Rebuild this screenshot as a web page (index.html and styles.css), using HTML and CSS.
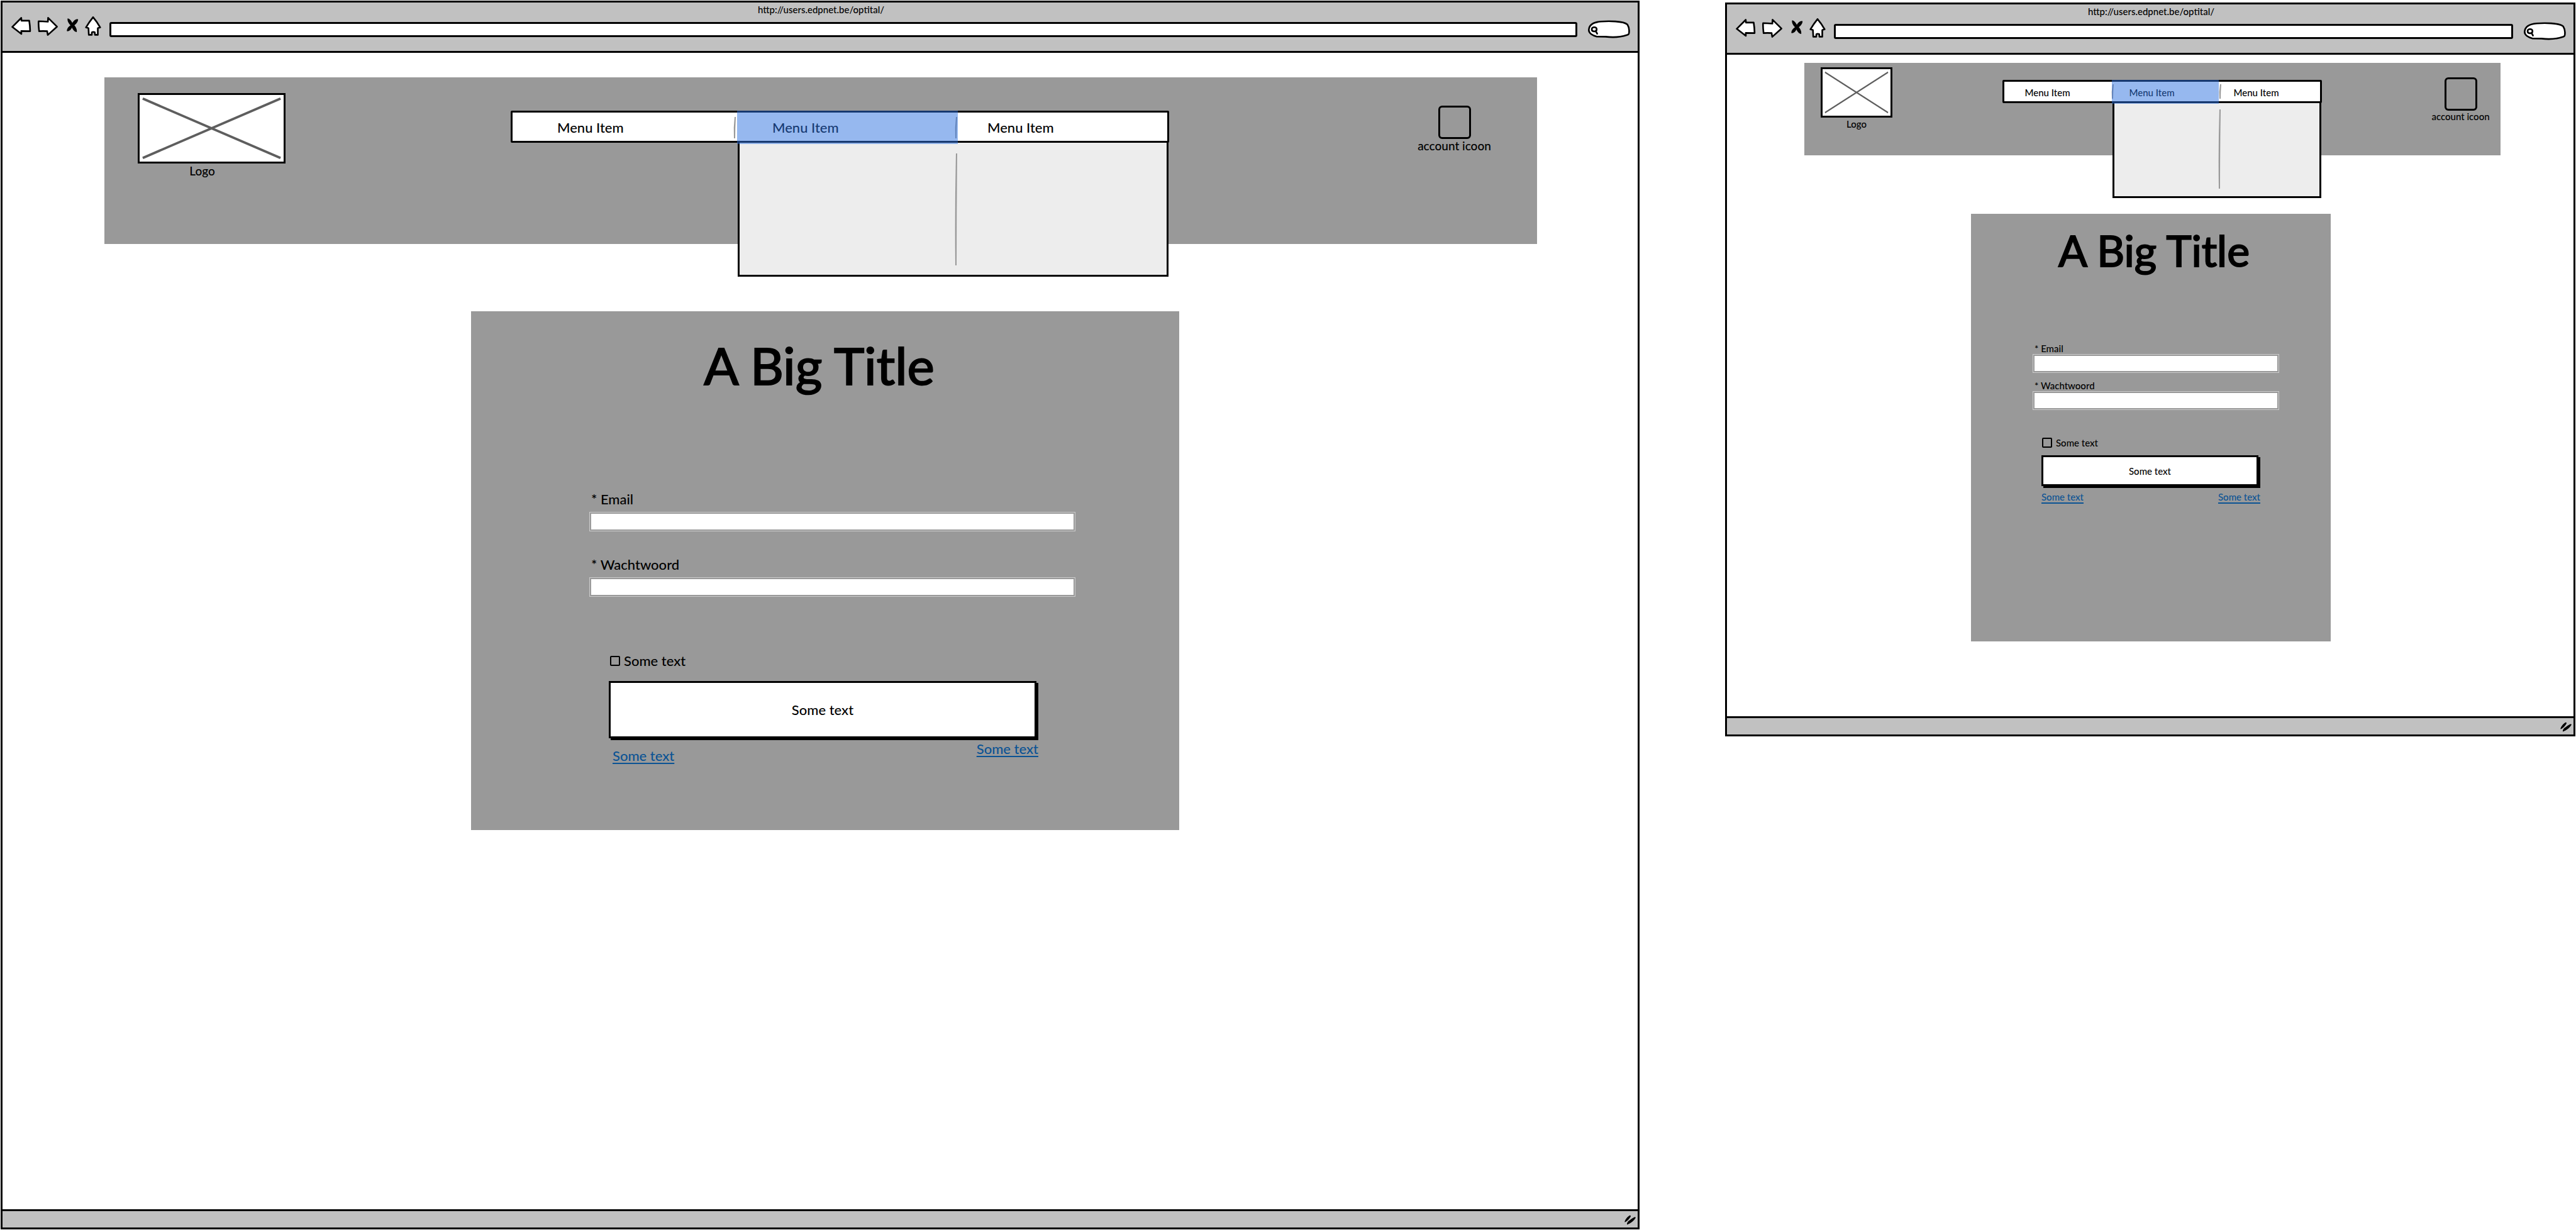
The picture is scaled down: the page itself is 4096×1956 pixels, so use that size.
FILE: index.html
```html
<!DOCTYPE html>
<html lang="nl">
<head>
<meta charset="utf-8">
<title>Login wireframe</title>
<link rel="stylesheet" href="styles.css">
</head>
<body>
<svg class="defs" aria-hidden="true">
  <symbol id="i-back" viewBox="94 138 170 164"><path class="ink" d="M102 227 178 151 180 174 245 174Q252 216 253 263L178 262 179 286Z"/></symbol>
  <symbol id="i-forward" viewBox="313 138 186 164"><path class="ink" d="M326 179Q356 179 404 183L406 150 481 225 403 295 398 263Q362 260 330 263Q325 220 325 190Z"/></symbol>
  <symbol id="i-stop" viewBox="546 138 122 164"><path d="M570 155C586 155 602 176 610 193C620 174 638 158 658 162C660 182 642 204 627 213C640 228 651 248 647 270C630 269 616 254 606 232C600 250 584 265 564 263C562 244 576 226 594 213C580 199 565 176 570 155Z"/></symbol>
  <symbol id="i-home" viewBox="711 138 138 164"><path class="ink" d="M780 145Q812 182 840 231L820 237 820 294 796 294 794 272Q781 266 770 272L769 294 744 294 741 237 720 231Q748 184 780 145Z"/></symbol>
  <symbol id="i-search" viewBox="786 168 366 155"><path class="ink" d="M797 250C800 210 835 185 900 180S1090 175 1125 205C1138 225 1142 255 1138 280Q1135 292 1120 295C1060 315 990 315 940 309L865 308C830 300 795 280 797 250Z"/><path class="ink" d="M822 246C822 222 864 222 864 246Q864 264 843 264Q822 264 822 246M857 264 868 283"/></symbol>
  <symbol id="i-grip" viewBox="490 200 104 84"><path d="M497 261C493 247 524 208 541 204Q550 204 547 212C536 235 511 259 497 261ZM517 281C512 272 523 252 540 243Q560 227 578 218Q592 217 588 224C574 249 548 270 517 281Z"/></symbol>
  <symbol id="i-cross" viewBox="0 0 229 106" preserveAspectRatio="none"><path class="cross" d="M2 3 227 103M2 103 227 3"/></symbol>
  <symbol id="i-line" viewBox="0 0 4 100" preserveAspectRatio="none"><path class="rule" d="M4 0Q3 50 3 100L1 100Q0 50 2 0Z"/></symbol>
</svg>

<section class="browser">
  <div class="chrome">
    <div class="chrome-title">http://users.edpnet.be/optital/</div>
    <div class="toolbar">
      <button class="tool back" aria-label="Back"><svg><use href="#i-back"/></svg></button>
      <button class="tool forward" aria-label="Forward"><svg><use href="#i-forward"/></svg></button>
      <button class="tool stop" aria-label="Stop"><svg><use href="#i-stop"/></svg></button>
      <button class="tool home" aria-label="Home"><svg><use href="#i-home"/></svg></button>
      <input class="address" type="text" aria-label="Address">
      <div class="search"><svg><use href="#i-search"/></svg><input type="text" aria-label="Search"></div>
    </div>
  </div>
  <main class="page">
    <header class="banner">
      <figure class="logo"><svg><use href="#i-cross"/></svg><figcaption>Logo</figcaption></figure>
      <nav class="menu">
        <div class="panel"><svg class="divider"><use href="#i-line"/></svg></div>
        <svg class="sep first"><use href="#i-line"/></svg>
        <svg class="sep second"><use href="#i-line"/></svg>
        <ul>
          <li><a href="#">Menu Item</a></li>
          <li><a href="#">Menu Item</a></li>
          <li><a href="#">Menu Item</a></li>
        </ul>
        <div class="highlight"></div>
      </nav>
      <div class="account"><div class="account-icon"></div><span>account icoon</span></div>
    </header>
    <form class="login">
      <h1>A Big Title</h1>
      <div class="fields">
        <div class="field"><label for="email-wide">* Email</label><input id="email-wide" type="text"></div>
        <div class="field"><label for="pass-wide">* Wachtwoord</label><input id="pass-wide" type="password"></div>
      </div>
      <div class="actions">
        <label class="check"><input type="checkbox">Some text</label>
        <button class="submit" type="button">Some text</button>
        <div class="links"><a href="#">Some text</a><a href="#">Some text</a></div>
      </div>
    </form>
  </main>
  <div class="status"><svg><use href="#i-grip"/></svg></div>
</section>

<section class="browser compact">
  <div class="chrome">
    <div class="chrome-title">http://users.edpnet.be/optital/</div>
    <div class="toolbar">
      <button class="tool back" aria-label="Back"><svg><use href="#i-back"/></svg></button>
      <button class="tool forward" aria-label="Forward"><svg><use href="#i-forward"/></svg></button>
      <button class="tool stop" aria-label="Stop"><svg><use href="#i-stop"/></svg></button>
      <button class="tool home" aria-label="Home"><svg><use href="#i-home"/></svg></button>
      <input class="address" type="text" aria-label="Address">
      <div class="search"><svg><use href="#i-search"/></svg><input type="text" aria-label="Search"></div>
    </div>
  </div>
  <main class="page">
    <header class="banner">
      <figure class="logo"><svg><use href="#i-cross"/></svg><figcaption>Logo</figcaption></figure>
      <nav class="menu">
        <div class="panel"><svg class="divider"><use href="#i-line"/></svg></div>
        <svg class="sep first"><use href="#i-line"/></svg>
        <svg class="sep second"><use href="#i-line"/></svg>
        <ul>
          <li><a href="#">Menu Item</a></li>
          <li><a href="#">Menu Item</a></li>
          <li><a href="#">Menu Item</a></li>
        </ul>
        <div class="highlight"></div>
      </nav>
      <div class="account"><div class="account-icon"></div><span>account icoon</span></div>
    </header>
    <form class="login">
      <h1>A Big Title</h1>
      <div class="fields">
        <div class="field"><label for="email-small">* Email</label><input id="email-small" type="text"></div>
        <div class="field"><label for="pass-small">* Wachtwoord</label><input id="pass-small" type="password"></div>
      </div>
      <div class="actions">
        <label class="check"><input type="checkbox">Some text</label>
        <button class="submit" type="button">Some text</button>
        <div class="links"><a href="#">Some text</a><a href="#">Some text</a></div>
      </div>
    </form>
  </main>
  <div class="status"><svg><use href="#i-grip"/></svg></div>
</section>
</body>
</html>
```
FILE: styles.css
```css
* { box-sizing: border-box; }

body {
  display: flex;
  gap: 136px;
  min-height: 100vh;
  margin: 0;
  padding: 1px;
  background: #fff;
  color: #000;
  font: 500 22px/26px Lato, "Liberation Sans", sans-serif;
}

svg { display: block; width: 100%; height: 100%; }
.defs { position: absolute; width: 0; height: 0; }
.ink { fill: #fff; stroke: #000; stroke-width: 14; stroke-linejoin: round; stroke-linecap: round; }
.cross { fill: none; stroke: #5e5e5e; stroke-width: 4; }
.rule { fill: #999; }

button, input { font: inherit; color: inherit; margin: 0; padding: 0; border: 0; border-radius: 0; background: none; appearance: none; }
h1, ul, figure { margin: 0; padding: 0; }

/* Browser frame */
.browser {
  display: flex;
  flex: 2600 1 0;
  flex-direction: column;
  min-width: 0;
  border: 3px solid #000;
  background: #fff;
}
.chrome { padding: 3px 11px 20px 14px; border-bottom: 3px solid #000; background: #c1c1c1; }
.chrome-title { font-size: 15px; line-height: 16px; text-align: center; }
.toolbar { display: flex; align-items: flex-start; gap: 9px; height: 38px; padding-top: 3px; }
.tool { height: 31px; }
.back { width: 32px; }
.forward { width: 35px; }
.stop { width: 23px; }
.home { width: 26px; }
.address {
  flex: 1;
  height: 24px;
  margin: 9px 7px 0 4px;
  border: 3px solid #000;
  border-radius: 3px;
  background: #fff;
}
.search { position: relative; width: 69px; height: 29px; margin-top: 6px; }
.search input { position: absolute; inset: 4px 8px 4px 18px; width: 43px; }
.status { display: flex; justify-content: flex-end; height: 29px; margin-top: auto; padding: 6px 2px 4px; border-top: 3px solid #000; background: #c1c1c1; }
.status svg { width: 20px; height: 16px; }

/* Banner */
.page { padding: 39px 0 40px; }
.banner {
  display: grid;
  grid-template-columns: 235px 358fr 1047px 396fr 115px;
  align-items: start;
  height: 265px;
  margin: 0 160px 0 162px;
  padding: 0 74px 0 53px;
  background: #999;
}
.logo { grid-column: 1; padding-top: 25px; }
.logo svg { height: 112px; padding: 3px; border: 3px solid #000; background: #fff; }
.logo figcaption { padding: 1px 30px 0 0; font-size: 19px; line-height: 22px; text-align: center; }
.menu { position: relative; grid-column: 3; height: 51px; margin-top: 53px; border: 3px solid #000; border-radius: 2px; background: #fff; }
.menu ul { display: grid; grid-template-columns: 342px 342px 1fr; padding: 11px 0 0 71px; list-style: none; }
.menu a { color: inherit; text-decoration: none; }
.sep { position: absolute; top: 7px; left: 351px; width: 4px; height: 34px; }
.sep.second { left: 703px; }
.panel { position: absolute; top: 45px; right: -2px; left: 358px; height: 216px; border: 3px solid #000; background: #ededed; }
.divider { width: 4px; height: 178px; margin: 17px 0 0 342px; }
.highlight { position: absolute; top: -3px; left: 357px; width: 351px; height: 53px; background: rgba(46, 114, 224, .5); }
.account { display: flex; grid-column: 5; flex-direction: column; align-items: center; padding-top: 45px; font-size: 19px; line-height: 22px; white-space: nowrap; }
.account-icon { width: 52px; height: 53px; border: 3px solid #000; border-radius: 6px; }

/* Login form */
.login { height: 825px; margin: 107px 729px 0 745px; padding-top: 35px; background: #999; }
.login h1 { padding-right: 19px; font-size: 82px; font-weight: 400; line-height: 100px; text-align: center; -webkit-text-stroke: 2px #000; }
.fields { display: flex; flex-direction: column; gap: 40px; margin: 151px 165px 0 188px; }
.field { display: flex; flex-direction: column; gap: 7px; }
.field label { padding-left: 3px; }
.field input { width: 100%; height: 31px; border: 3px solid #999; outline: 1px solid #ccc; outline-offset: -1px; background: #fff; }
.actions { display: flex; flex-direction: column; margin: 89px 224px 0 219px; }
.check { display: flex; align-items: center; gap: 6px; padding-left: 2px; }
.check input { width: 16px; height: 16px; border: 2px solid #000; border-radius: 2px; }
.submit { height: 91px; margin: 19px 3px 0 0; border: 3px solid #000; background: #fff; box-shadow: 3px 3px 0 #000; }
.links { display: flex; justify-content: space-between; align-items: flex-start; padding: 4px 0 0 6px; }
.links a { color: #0b5394; text-decoration: underline 2px; text-underline-offset: 3px; text-decoration-skip-ink: none; }
.links a:first-child { margin-top: 11px; }

/* Small screen variant */
.compact { flex-grow: 1346; align-self: flex-start; margin-top: 3px; font-size: 15px; line-height: 18px; }
.compact .page { padding: 13px 0 119px; }
.compact .banner { grid-template-columns: 114px 175fr 508px 176fr 91px; height: 147px; margin: 0 116px 0 123px; padding: 0 18px 0 26px; }
.compact .logo { padding-top: 7px; }
.compact .logo svg { height: 80px; }
.compact .logo figcaption { padding: 1px 0 0; font-size: 15px; line-height: 18px; }
.compact .menu { height: 37px; margin-top: 27px; }
.compact .menu ul { grid-template-columns: 166px 166px 1fr; padding: 8px 0 0 33px; }
.compact .sep { top: 4px; left: 170px; height: 23px; }
.compact .sep.second { left: 341px; }
.compact .panel { top: 31px; left: 172px; height: 154px; }
.compact .divider { height: 126px; margin: 10px 0 0 165px; }
.compact .highlight { left: 171px; width: 170px; height: 38px; }
.compact .account { padding-top: 23px; font-size: 15px; line-height: 18px; }
.compact .login { height: 680px; margin: 93px 386px 0 388px; padding-top: 18px; }
.compact .login h1 { padding: 0 0 0 10px; font-size: 68px; line-height: 80px; }
.compact .fields { gap: 11px; margin: 107px 82px 0 98px; }
.compact .field { gap: 0; }
.compact .field input { height: 30px; }
.compact .actions { margin: 43px 112px 0; }
.compact .check { padding-left: 1px; }
.compact .submit { height: 49px; margin-top: 11px; }
.compact .links { padding: 8px 0 0; }
.compact .links a { margin-top: 0; }
```
